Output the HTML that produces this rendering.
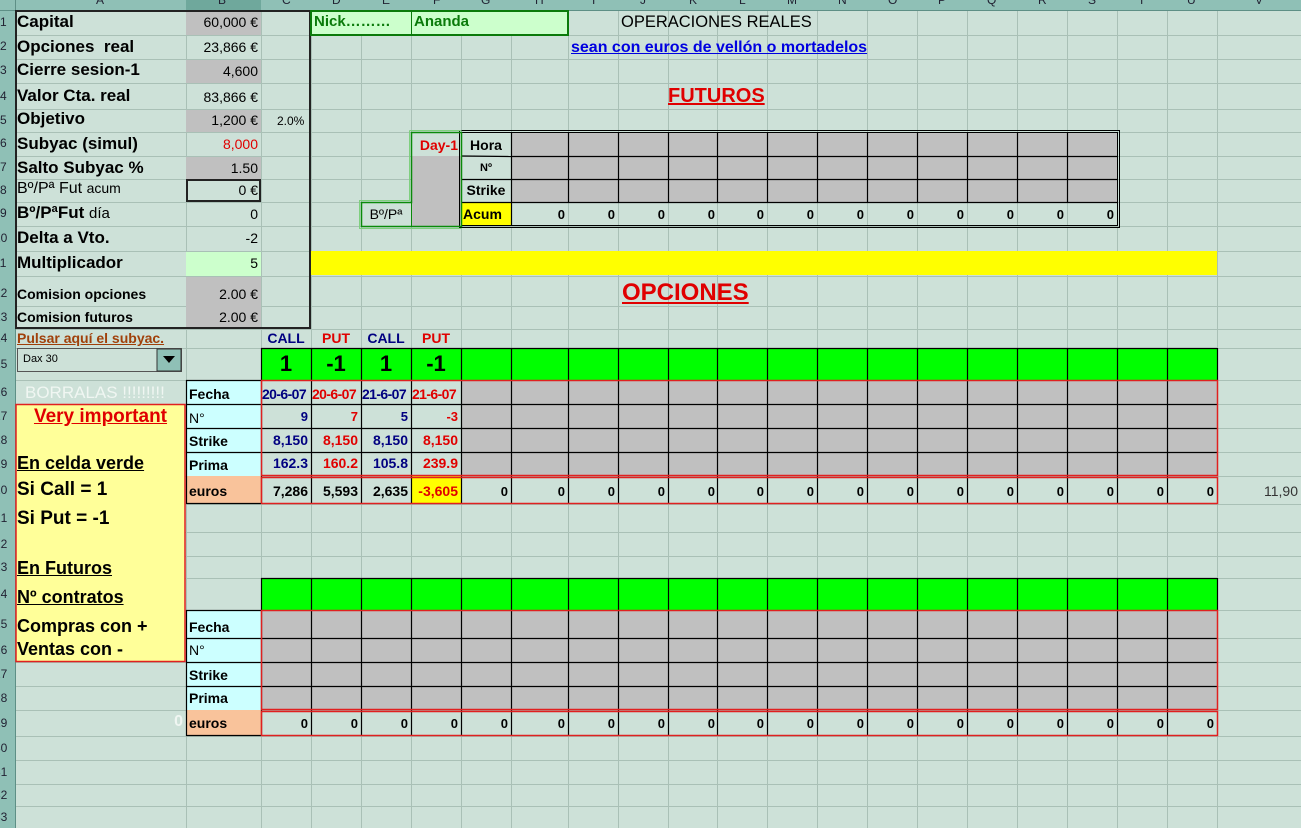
<!DOCTYPE html>
<html><head><meta charset="utf-8"><style>
body{margin:0;width:1301px;height:828px;overflow:hidden;background:#cde1d8;position:relative;font-family:"Liberation Sans",Arial,sans-serif}
svg{position:absolute;left:0;top:0}
.t{position:absolute;white-space:nowrap;font-size:13px;font-weight:bold;color:#000;box-sizing:border-box}
.r{text-align:right;padding-right:3px}
.c{text-align:center}
.L{font-size:17px;padding-left:2px}
.v{font-weight:normal;font-size:14px}
.n{color:#000080}.red{color:#e00000}
</style></head><body>
<svg width="1301" height="828">
<rect width="1301" height="828" fill="#cde1d8"/>
<g stroke="#a9c0b6" stroke-width="1">
<line x1="186.5" y1="0" x2="186.5" y2="828"/><line x1="261.5" y1="0" x2="261.5" y2="828"/><line x1="311.5" y1="0" x2="311.5" y2="828"/><line x1="361.5" y1="0" x2="361.5" y2="828"/><line x1="411.5" y1="0" x2="411.5" y2="828"/><line x1="461.5" y1="0" x2="461.5" y2="828"/><line x1="511.5" y1="0" x2="511.5" y2="828"/><line x1="568.5" y1="0" x2="568.5" y2="828"/><line x1="618.5" y1="0" x2="618.5" y2="828"/><line x1="668.5" y1="0" x2="668.5" y2="828"/><line x1="717.5" y1="0" x2="717.5" y2="828"/><line x1="767.5" y1="0" x2="767.5" y2="828"/><line x1="817.5" y1="0" x2="817.5" y2="828"/><line x1="867.5" y1="0" x2="867.5" y2="828"/><line x1="917.5" y1="0" x2="917.5" y2="828"/><line x1="967.5" y1="0" x2="967.5" y2="828"/><line x1="1017.5" y1="0" x2="1017.5" y2="828"/><line x1="1067.5" y1="0" x2="1067.5" y2="828"/><line x1="1117.5" y1="0" x2="1117.5" y2="828"/><line x1="1167.5" y1="0" x2="1167.5" y2="828"/><line x1="1217.5" y1="0" x2="1217.5" y2="828"/>
<line x1="0" y1="35.5" x2="1301" y2="35.5"/><line x1="0" y1="59.5" x2="1301" y2="59.5"/><line x1="0" y1="83.5" x2="1301" y2="83.5"/><line x1="0" y1="109.5" x2="1301" y2="109.5"/><line x1="0" y1="132.5" x2="1301" y2="132.5"/><line x1="0" y1="156.5" x2="1301" y2="156.5"/><line x1="0" y1="179.5" x2="1301" y2="179.5"/><line x1="0" y1="202.5" x2="1301" y2="202.5"/><line x1="0" y1="226.5" x2="1301" y2="226.5"/><line x1="0" y1="251.5" x2="1301" y2="251.5"/><line x1="0" y1="276.5" x2="1301" y2="276.5"/><line x1="0" y1="306.5" x2="1301" y2="306.5"/><line x1="0" y1="329.5" x2="1301" y2="329.5"/><line x1="0" y1="348.5" x2="1301" y2="348.5"/><line x1="0" y1="380.5" x2="1301" y2="380.5"/><line x1="0" y1="404.5" x2="1301" y2="404.5"/><line x1="0" y1="428.5" x2="1301" y2="428.5"/><line x1="0" y1="452.5" x2="1301" y2="452.5"/><line x1="0" y1="476.5" x2="1301" y2="476.5"/><line x1="0" y1="504.5" x2="1301" y2="504.5"/><line x1="0" y1="532.5" x2="1301" y2="532.5"/><line x1="0" y1="556.5" x2="1301" y2="556.5"/><line x1="0" y1="578.5" x2="1301" y2="578.5"/><line x1="0" y1="610.5" x2="1301" y2="610.5"/><line x1="0" y1="638.5" x2="1301" y2="638.5"/><line x1="0" y1="662.5" x2="1301" y2="662.5"/><line x1="0" y1="686.5" x2="1301" y2="686.5"/><line x1="0" y1="710.5" x2="1301" y2="710.5"/><line x1="0" y1="736.5" x2="1301" y2="736.5"/><line x1="0" y1="760.5" x2="1301" y2="760.5"/><line x1="0" y1="784.5" x2="1301" y2="784.5"/><line x1="0" y1="806.5" x2="1301" y2="806.5"/>
</g>
<rect x="0" y="0" width="1301" height="10" fill="#8fc0b6"/>
<rect x="186" y="0" width="75" height="10" fill="#6fa89c"/>
<rect x="0" y="0" width="15" height="828" fill="#8fc0b6"/>
<line x1="0" y1="10.5" x2="1301" y2="10.5" stroke="#5e8f86"/>
<line x1="15.5" y1="0" x2="15.5" y2="828" stroke="#5e8f86"/>
<g fill="#c0c0c0"><rect x="186" y="11" width="75" height="24"/><rect x="186" y="60" width="75" height="23"/><rect x="186" y="110" width="75" height="22"/><rect x="186" y="157" width="75" height="22"/><rect x="186" y="277" width="75" height="52"/></g>
<rect x="186" y="252" width="75" height="24" fill="#ccffcc"/>
<rect x="16" y="11" width="294" height="317" fill="none" stroke="#222" stroke-width="2"/>
<rect x="187" y="180" width="73" height="21" fill="none" stroke="#222" stroke-width="2"/>
<rect x="311" y="11" width="257" height="24" fill="#ccffcc" stroke="#0a7a0a" stroke-width="2"/>
<line x1="411.5" y1="11" x2="411.5" y2="35" stroke="#0a7a0a"/>
<rect x="411" y="156" width="50" height="70" fill="#c0c0c0"/>
<rect x="461" y="202" width="50" height="24" fill="#ffff00"/>
<rect x="511" y="132" width="606" height="70" fill="#c0c0c0"/>
<g stroke="#000" stroke-width="1.2">
<line x1="511" y1="156.5" x2="1117" y2="156.5"/><line x1="461" y1="179.5" x2="1117" y2="179.5"/><line x1="461" y1="202.5" x2="1117" y2="202.5"/>
<line x1="511.5" y1="132" x2="511.5" y2="226"/><line x1="568.5" y1="132" x2="568.5" y2="202"/><line x1="618.5" y1="132" x2="618.5" y2="202"/><line x1="668.5" y1="132" x2="668.5" y2="202"/><line x1="717.5" y1="132" x2="717.5" y2="202"/><line x1="767.5" y1="132" x2="767.5" y2="202"/><line x1="817.5" y1="132" x2="817.5" y2="202"/><line x1="867.5" y1="132" x2="867.5" y2="202"/><line x1="917.5" y1="132" x2="917.5" y2="202"/><line x1="967.5" y1="132" x2="967.5" y2="202"/><line x1="1017.5" y1="132" x2="1017.5" y2="202"/><line x1="1067.5" y1="132" x2="1067.5" y2="202"/>
<line x1="461.5" y1="156" x2="511" y2="156.5"/>
</g>
<rect x="461.5" y="132.5" width="656" height="93" fill="none" stroke="#000"/>
<rect x="459.5" y="130.5" width="660" height="97" fill="none" stroke="#000"/>
<path d="M411.5 132.5H461.5V226.5H361.5V202.5H411.5Z" fill="none" stroke="#0a8a0a" stroke-width="1.5"/>
<path d="M409.5 130.5H461.5M409.5 130.5V200.5H359.5V228.5H461.5" fill="none" stroke="#7fcf7f" stroke-width="1"/>
<line x1="411.5" y1="202" x2="411.5" y2="226" stroke="#0a8a0a"/>
<rect x="311" y="251" width="906" height="24" fill="#ffff00"/>
<rect x="261" y="348" width="956" height="32" fill="#00ff00"/>
<rect x="186" y="380" width="75" height="96" fill="#ccffff"/>
<rect x="186" y="476" width="75" height="28" fill="#f9c39b"/>
<rect x="461" y="380" width="756" height="96" fill="#c0c0c0"/>
<rect x="411" y="476" width="50" height="28" fill="#ffff00"/>
<rect x="261" y="578" width="956" height="32" fill="#00ff00"/>
<rect x="261" y="610" width="956" height="100" fill="#c0c0c0"/>
<rect x="186" y="610" width="75" height="100" fill="#ccffff"/>
<rect x="186" y="710" width="75" height="26" fill="#f9c39b"/>
<g stroke="#000" stroke-width="1.2">
<line x1="186" y1="380.5" x2="261" y2="380.5"/><line x1="186" y1="610.5" x2="261" y2="610.5"/>
<line x1="186.5" y1="380" x2="186.5" y2="504"/><line x1="186.5" y1="610" x2="186.5" y2="736"/>
<line x1="186" y1="404.5" x2="1217" y2="404.5"/><line x1="186" y1="428.5" x2="1217" y2="428.5"/><line x1="186" y1="452.5" x2="1217" y2="452.5"/><line x1="186" y1="503.5" x2="261" y2="503.5"/>
<line x1="186" y1="638.5" x2="1217" y2="638.5"/><line x1="186" y1="662.5" x2="1217" y2="662.5"/><line x1="186" y1="686.5" x2="1217" y2="686.5"/><line x1="186" y1="735.5" x2="261" y2="735.5"/>
<line x1="261" y1="348.5" x2="1217" y2="348.5"/><line x1="261" y1="578.5" x2="1217" y2="578.5"/>
</g>
<g stroke="#000" stroke-width="1.2">
<path d="M261.5 348V504M311.5 348V504M361.5 348V504M411.5 348V504M461.5 348V504M511.5 348V504M568.5 348V504M618.5 348V504M668.5 348V504M717.5 348V504M767.5 348V504M817.5 348V504M867.5 348V504M917.5 348V504M967.5 348V504M1017.5 348V504M1067.5 348V504M1117.5 348V504M1167.5 348V504M1217.5 348V380"/>
<path d="M261.5 578V736M311.5 578V736M361.5 578V736M411.5 578V736M461.5 578V736M511.5 578V736M568.5 578V736M618.5 578V736M668.5 578V736M717.5 578V736M767.5 578V736M817.5 578V736M867.5 578V736M917.5 578V736M967.5 578V736M1017.5 578V736M1067.5 578V736M1117.5 578V736M1167.5 578V736M1217.5 578V610"/>
</g>
<g fill="none" stroke="#e02020" stroke-width="1.5">
<rect x="261.5" y="380.5" width="956" height="95"/><rect x="261.5" y="477.5" width="956" height="26"/>
<rect x="261.5" y="610.5" width="956" height="99"/><rect x="261.5" y="711.5" width="956" height="24"/>
</g>
<rect x="16" y="404.5" width="169" height="257" fill="#ffff99" stroke="#e02020" stroke-width="1.5"/>
<rect x="17.5" y="348.5" width="164" height="23" fill="#cde1d8" stroke="#555"/>
<rect x="157" y="349" width="24" height="22" fill="#8fc0b6" stroke="#333"/>
<path d="M163 356H175L169 363Z" fill="#000"/>
</svg>

<div style="position:absolute;left:0;top:0;width:15px;font-size:12px;color:#223;line-height:1">
<div style="position:absolute;top:16px">1</div><div style="position:absolute;top:40px">2</div><div style="position:absolute;top:64px">3</div><div style="position:absolute;top:90px">4</div><div style="position:absolute;top:114px">5</div><div style="position:absolute;top:137px">6</div><div style="position:absolute;top:161px">7</div><div style="position:absolute;top:184px">8</div><div style="position:absolute;top:207px">9</div><div style="position:absolute;top:232px;left:-6px">10</div><div style="position:absolute;top:257px;left:-6px">11</div><div style="position:absolute;top:287px;left:-6px">12</div><div style="position:absolute;top:311px;left:-6px">13</div><div style="position:absolute;top:332px;left:-6px">14</div><div style="position:absolute;top:358px;left:-6px">15</div><div style="position:absolute;top:386px;left:-6px">16</div><div style="position:absolute;top:410px;left:-6px">17</div><div style="position:absolute;top:434px;left:-6px">18</div><div style="position:absolute;top:458px;left:-6px">19</div><div style="position:absolute;top:484px;left:-6px">20</div><div style="position:absolute;top:512px;left:-6px">21</div><div style="position:absolute;top:538px;left:-6px">22</div><div style="position:absolute;top:561px;left:-6px">23</div><div style="position:absolute;top:588px;left:-6px">24</div><div style="position:absolute;top:618px;left:-6px">25</div><div style="position:absolute;top:644px;left:-6px">26</div><div style="position:absolute;top:668px;left:-6px">27</div><div style="position:absolute;top:692px;left:-6px">28</div><div style="position:absolute;top:717px;left:-6px">29</div><div style="position:absolute;top:742px;left:-6px">30</div><div style="position:absolute;top:766px;left:-6px">31</div><div style="position:absolute;top:789px;left:-6px">32</div><div style="position:absolute;top:811px;left:-6px">33</div>
</div>
<div style="position:absolute;left:0;top:-6px;width:1301px;height:10px;font-size:12px;color:#223;line-height:12px">
<span style="position:absolute;left:96px">A</span><span style="position:absolute;left:218px">B</span><span style="position:absolute;left:282px">C</span><span style="position:absolute;left:332px">D</span><span style="position:absolute;left:382px">E</span><span style="position:absolute;left:433px">F</span><span style="position:absolute;left:481px">G</span><span style="position:absolute;left:535px">H</span><span style="position:absolute;left:592px">I</span><span style="position:absolute;left:640px">J</span><span style="position:absolute;left:689px">K</span><span style="position:absolute;left:739px">L</span><span style="position:absolute;left:787px">M</span><span style="position:absolute;left:838px">N</span><span style="position:absolute;left:888px">O</span><span style="position:absolute;left:938px">P</span><span style="position:absolute;left:987px">Q</span><span style="position:absolute;left:1038px">R</span><span style="position:absolute;left:1088px">S</span><span style="position:absolute;left:1138px">T</span><span style="position:absolute;left:1187px">U</span><span style="position:absolute;left:1255px">V</span>
</div>

<div class="t L" style="left:15px;top:12px">Capital</div>
<div class="t L" style="left:15px;top:37px">Opciones&nbsp; real</div>
<div class="t L" style="left:15px;top:60px">Cierre sesion-1</div>
<div class="t L" style="left:15px;top:86px">Valor Cta. real</div>
<div class="t L" style="left:15px;top:109px">Objetivo</div>
<div class="t L" style="left:15px;top:134px">Subyac (simul)</div>
<div class="t L" style="left:15px;top:158px">Salto Subyac %</div>
<div class="t L" style="left:15px;top:180px;font-weight:normal;font-size:16px">Bº/Pª Fut <span style="font-size:14px">acum</span></div>
<div class="t L" style="left:15px;top:203px">Bº/PªFut <span style="font-weight:normal;font-size:15px">día</span></div>
<div class="t L" style="left:15px;top:228px">Delta a Vto.</div>
<div class="t L" style="left:15px;top:253px">Multiplicador</div>
<div class="t L" style="left:15px;top:286px;font-size:14px">Comision opciones</div>
<div class="t L" style="left:15px;top:309px;font-size:14px">Comision futuros</div>

<div class="t r v" style="left:186px;width:75px;top:14px">60,000 €</div>
<div class="t r v" style="left:186px;width:75px;top:39px">23,866 €</div>
<div class="t r v" style="left:186px;width:75px;top:63px">4,600</div>
<div class="t r v" style="left:186px;width:75px;top:89px">83,866 €</div>
<div class="t r v" style="left:186px;width:75px;top:112px">1,200 €</div>
<div class="t r v red" style="left:186px;width:75px;top:136px">8,000</div>
<div class="t r v" style="left:186px;width:75px;top:160px">1.50</div>
<div class="t r v" style="left:186px;width:75px;top:182px">0 €</div>
<div class="t r v" style="left:186px;width:75px;top:206px">0</div>
<div class="t r v" style="left:186px;width:75px;top:230px">-2</div>
<div class="t r v" style="left:186px;width:75px;top:255px">5</div>
<div class="t r v" style="left:186px;width:75px;top:286px">2.00 €</div>
<div class="t r v" style="left:186px;width:75px;top:309px">2.00 €</div>
<div class="t" style="left:277px;top:114px;font-weight:normal;font-size:12px">2.0%</div>

<div class="t" style="left:314px;top:13px;color:#0a7a0a;font-size:15px">Nick………</div>
<div class="t" style="left:414px;top:13px;color:#0a7a0a;font-size:15px">Ananda</div>
<div class="t" style="left:621px;top:13px;font-weight:normal;font-size:16.5px">OPERACIONES REALES</div>
<div class="t" style="left:571px;top:39px;color:#0000e0;text-decoration:underline;font-size:16px">sean con euros de vellón o mortadelos</div>
<div class="t" style="left:668px;top:85px;color:#e00000;text-decoration:underline;font-size:20px">FUTUROS</div>
<div class="t" style="left:622px;top:279px;color:#e00000;text-decoration:underline;font-size:24px">OPCIONES</div>

<div class="t r red" style="left:411px;width:50px;top:137px;font-size:14px">Day-1</div>
<div class="t c" style="left:461px;width:50px;top:137px;font-size:14px">Hora</div>
<div class="t c" style="left:461px;width:50px;top:162px;font-size:11px">Nº</div>
<div class="t c" style="left:461px;width:50px;top:182px;font-size:14px">Strike</div>
<div class="t" style="left:463px;top:206px;font-size:14px">Acum</div>
<div class="t c" style="left:361px;width:50px;top:206px;font-weight:normal;font-size:14px">Bº/Pª</div>
<div class="t r" style="left:511px;width:57px;top:207px">0</div>
<div class="t r" style="left:568px;width:50px;top:207px">0</div><div class="t r" style="left:618px;width:50px;top:207px">0</div><div class="t r" style="left:668px;width:50px;top:207px">0</div><div class="t r" style="left:717px;width:50px;top:207px">0</div><div class="t r" style="left:767px;width:50px;top:207px">0</div><div class="t r" style="left:817px;width:50px;top:207px">0</div><div class="t r" style="left:867px;width:50px;top:207px">0</div><div class="t r" style="left:917px;width:50px;top:207px">0</div><div class="t r" style="left:967px;width:50px;top:207px">0</div><div class="t r" style="left:1017px;width:50px;top:207px">0</div><div class="t r" style="left:1067px;width:50px;top:207px">0</div>

<div class="t" style="left:17px;top:330px;font-size:14px;color:#a0400a;text-decoration:underline">Pulsar aquí el subyac.</div>
<div class="t" style="left:23px;top:353px;font-size:11px;font-weight:normal">Dax 30</div>
<div class="t c" style="left:261px;width:50px;top:330px;color:#000080;font-size:14px">CALL</div>
<div class="t c" style="left:311px;width:50px;top:330px;color:#e00000;font-size:14px">PUT</div>
<div class="t c" style="left:361px;width:50px;top:330px;color:#000080;font-size:14px">CALL</div>
<div class="t c" style="left:411px;width:50px;top:330px;color:#e00000;font-size:14px">PUT</div>
<div class="t c" style="left:261px;width:50px;top:351px;font-size:22px">1</div>
<div class="t c" style="left:311px;width:50px;top:351px;font-size:22px">-1</div>
<div class="t c" style="left:361px;width:50px;top:351px;font-size:22px">1</div>
<div class="t c" style="left:411px;width:50px;top:351px;font-size:22px">-1</div>
<div class="t" style="left:25px;top:383px;color:#f0f6f2;font-weight:normal;font-size:17px">BORRALAS !!!!!!!!!</div>
<div class="t" style="left:189px;top:386px;font-size:14px">Fecha</div>
<div class="t" style="left:189px;top:410px;font-weight:normal;font-size:14px">N°</div>
<div class="t" style="left:189px;top:433px;font-size:14px">Strike</div>
<div class="t" style="left:189px;top:457px;font-size:14px">Prima</div>
<div class="t" style="left:189px;top:483px;font-size:14px">euros</div>
<div class="t n" style="left:262px;top:386px;letter-spacing:-0.6px;font-size:14px">20-6-07</div>
<div class="t red" style="left:312px;top:386px;letter-spacing:-0.6px;font-size:14px">20-6-07</div>
<div class="t n" style="left:362px;top:386px;letter-spacing:-0.6px;font-size:14px">21-6-07</div>
<div class="t red" style="left:412px;top:386px;letter-spacing:-0.6px;font-size:14px">21-6-07</div>
<div class="t r n" style="left:261px;width:50px;top:409px">9</div>
<div class="t r red" style="left:311px;width:50px;top:409px">7</div>
<div class="t r n" style="left:361px;width:50px;top:409px">5</div>
<div class="t r red" style="left:411px;width:50px;top:409px">-3</div>
<div class="t r n" style="left:261px;width:50px;top:432px;font-size:14px">8,150</div>
<div class="t r red" style="left:311px;width:50px;top:432px;font-size:14px">8,150</div>
<div class="t r n" style="left:361px;width:50px;top:432px;font-size:14px">8,150</div>
<div class="t r red" style="left:411px;width:50px;top:432px;font-size:14px">8,150</div>
<div class="t r n" style="left:261px;width:50px;top:455px;font-size:14px">162.3</div>
<div class="t r red" style="left:311px;width:50px;top:455px;font-size:14px">160.2</div>
<div class="t r n" style="left:361px;width:50px;top:455px;font-size:14px">105.8</div>
<div class="t r red" style="left:411px;width:50px;top:455px;font-size:14px">239.9</div>
<div class="t r" style="left:261px;width:50px;top:483px;font-size:14px">7,286</div>
<div class="t r" style="left:311px;width:50px;top:483px;font-size:14px">5,593</div>
<div class="t r" style="left:361px;width:50px;top:483px;font-size:14px">2,635</div>
<div class="t r red" style="left:411px;width:50px;top:483px;font-size:14px">-3,605</div>
<div class="t r" style="left:461px;width:50px;top:484px">0</div><div class="t r" style="left:511px;width:57px;top:484px">0</div><div class="t r" style="left:568px;width:50px;top:484px">0</div><div class="t r" style="left:618px;width:50px;top:484px">0</div><div class="t r" style="left:668px;width:50px;top:484px">0</div><div class="t r" style="left:717px;width:50px;top:484px">0</div><div class="t r" style="left:767px;width:50px;top:484px">0</div><div class="t r" style="left:817px;width:50px;top:484px">0</div><div class="t r" style="left:867px;width:50px;top:484px">0</div><div class="t r" style="left:917px;width:50px;top:484px">0</div><div class="t r" style="left:967px;width:50px;top:484px">0</div><div class="t r" style="left:1017px;width:50px;top:484px">0</div><div class="t r" style="left:1067px;width:50px;top:484px">0</div><div class="t r" style="left:1117px;width:50px;top:484px">0</div><div class="t r" style="left:1167px;width:50px;top:484px">0</div>
<div class="t r" style="left:1217px;width:84px;top:483px;font-weight:normal;color:#333;font-size:14px">11,90</div>

<div class="t c" style="left:15px;width:171px;top:406px;color:#e00000;text-decoration:underline;font-size:19px">Very important</div>
<div class="t L" style="left:15px;top:453px;text-decoration:underline;font-size:18px">En celda verde</div>
<div class="t L" style="left:15px;top:479px;font-size:19px">Si Call = 1</div>
<div class="t L" style="left:15px;top:508px;font-size:19px">Si Put = -1</div>
<div class="t L" style="left:15px;top:558px;text-decoration:underline;font-size:18px">En Futuros</div>
<div class="t L" style="left:15px;top:587px;text-decoration:underline;font-size:18px">Nº contratos</div>
<div class="t L" style="left:15px;top:616px;font-size:18px">Compras con +</div>
<div class="t L" style="left:15px;top:639px;font-size:18px">Ventas con -</div>

<div class="t" style="left:189px;top:619px;font-size:14px">Fecha</div>
<div class="t" style="left:189px;top:642px;font-weight:normal;font-size:14px">N°</div>
<div class="t" style="left:189px;top:667px;font-size:14px">Strike</div>
<div class="t" style="left:189px;top:690px;font-size:14px">Prima</div>
<div class="t" style="left:189px;top:715px;font-size:14px">euros</div>
<div class="t r" style="left:15px;width:171px;top:713px;color:#f0f6f2;font-size:16px">0</div>
<div class="t r" style="left:261px;width:50px;top:716px">0</div><div class="t r" style="left:311px;width:50px;top:716px">0</div><div class="t r" style="left:361px;width:50px;top:716px">0</div><div class="t r" style="left:411px;width:50px;top:716px">0</div><div class="t r" style="left:461px;width:50px;top:716px">0</div><div class="t r" style="left:511px;width:57px;top:716px">0</div><div class="t r" style="left:568px;width:50px;top:716px">0</div><div class="t r" style="left:618px;width:50px;top:716px">0</div><div class="t r" style="left:668px;width:50px;top:716px">0</div><div class="t r" style="left:717px;width:50px;top:716px">0</div><div class="t r" style="left:767px;width:50px;top:716px">0</div><div class="t r" style="left:817px;width:50px;top:716px">0</div><div class="t r" style="left:867px;width:50px;top:716px">0</div><div class="t r" style="left:917px;width:50px;top:716px">0</div><div class="t r" style="left:967px;width:50px;top:716px">0</div><div class="t r" style="left:1017px;width:50px;top:716px">0</div><div class="t r" style="left:1067px;width:50px;top:716px">0</div><div class="t r" style="left:1117px;width:50px;top:716px">0</div><div class="t r" style="left:1167px;width:50px;top:716px">0</div>
</body></html>
